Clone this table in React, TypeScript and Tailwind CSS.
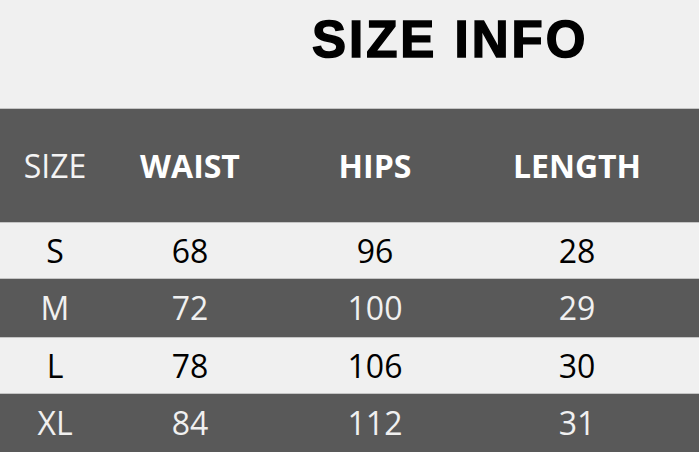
const rows = [
  { size: "S", waist: "68", hips: "96", length: "28" },
  { size: "M", waist: "72", hips: "100", length: "29" },
  { size: "L", waist: "78", hips: "106", length: "30" },
  { size: "XL", waist: "84", hips: "112", length: "31" },
];

export default function App() {
  return (
    <div className="w-[699px] h-[452px] bg-[#f0f0f0] overflow-hidden font-['Open_Sans',sans-serif]">
      {/* Title */}
      <div className="h-[108px] pl-[312px] pt-[14px]">
        <h1 className="font-['Liberation_Sans',sans-serif] text-[51px] leading-none font-bold tracking-[3px] text-black [-webkit-text-stroke:1.5px_black]">
          SIZE INFO
        </h1>
      </div>

      {/* Header */}
      <div className="h-[114px] bg-[#595959] border-t border-[#c4c4c4] grid grid-cols-[110px_160px_210px_194px_1fr] items-center text-white text-[32px]">
        <div className="text-center font-normal text-[#f4f4f4]">SIZE</div>
        <div className="text-center font-bold">WAIST</div>
        <div className="text-center font-bold">HIPS</div>
        <div className="text-center font-bold">LENGTH</div>
        <div />
      </div>

      {/* Rows */}
      {rows.map((r, i) => {
        const dark = i % 2 === 1;
        return (
          <div
            key={r.size}
            className={
              dark
                ? "h-[59px] bg-[#595959] border-t border-[#c4c4c4] text-[#f0f0f0] grid grid-cols-[110px_160px_210px_194px_1fr] items-center text-[32px]"
                : "h-[56px] bg-[#f0f0f0] border-t border-[#c4c4c4] text-black grid grid-cols-[110px_160px_210px_194px_1fr] items-center text-[32px]"
            }
          >
            <div className="text-center">{r.size}</div>
            <div className="text-center">{r.waist}</div>
            <div className="text-center">{r.hips}</div>
            <div className="text-center">{r.length}</div>
            <div />
          </div>
        );
      })}
    </div>
  );
}
